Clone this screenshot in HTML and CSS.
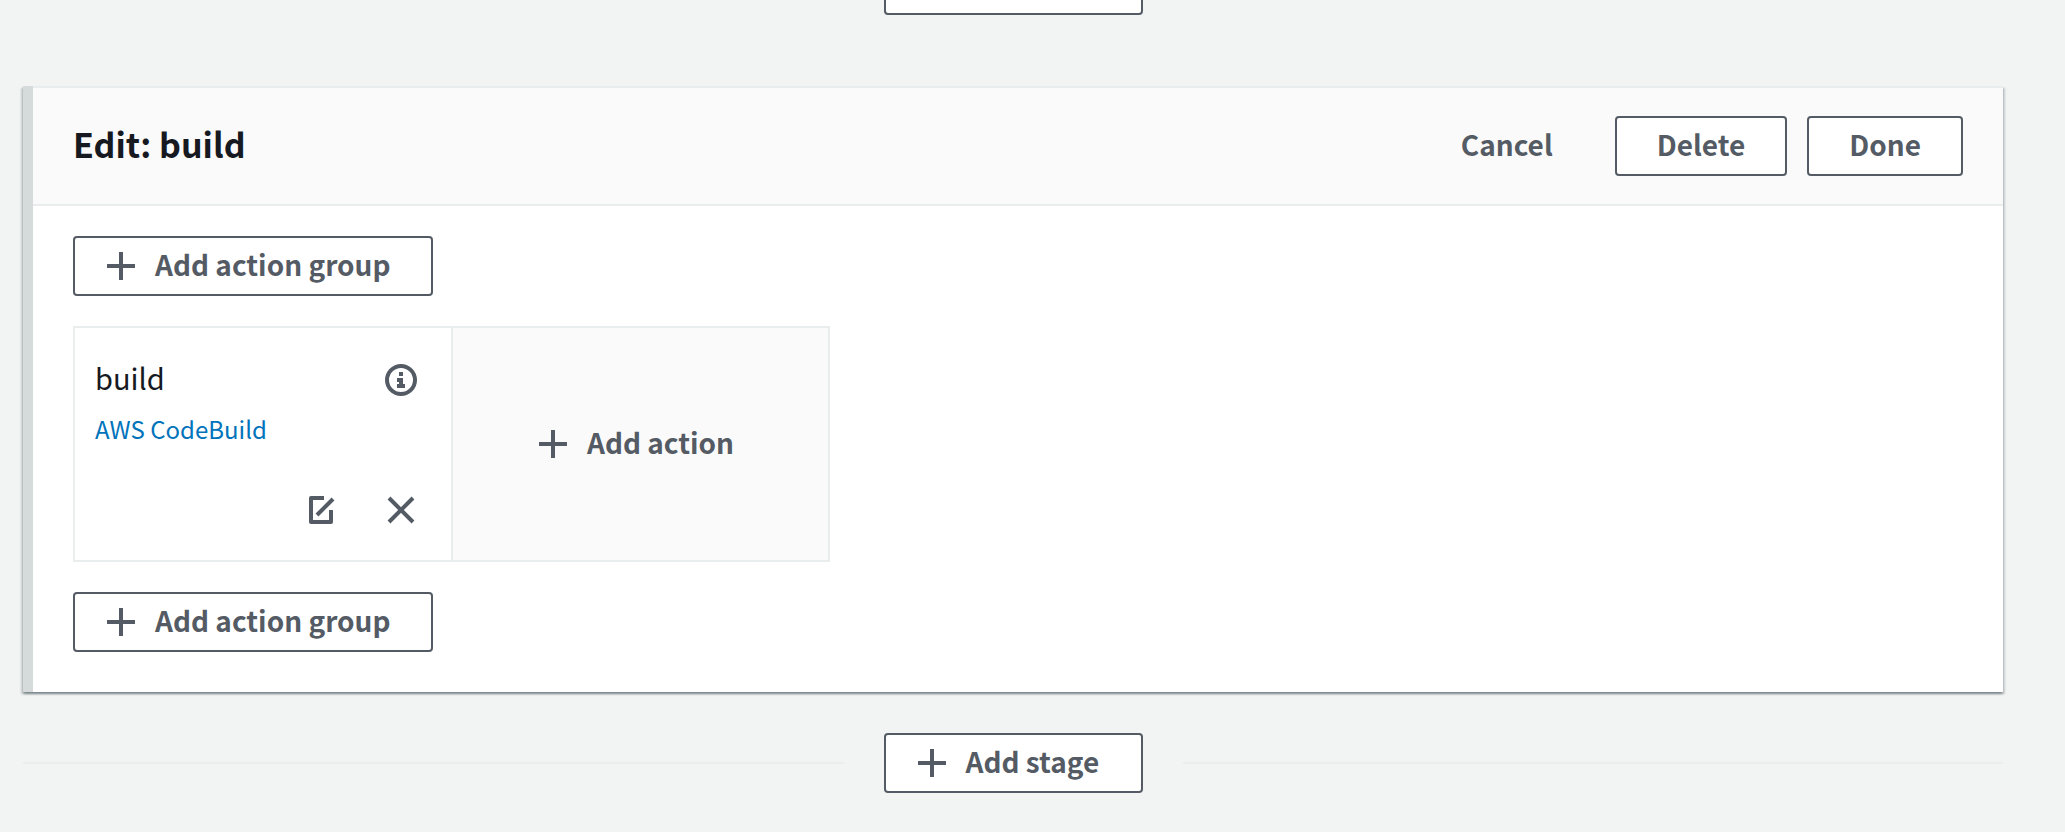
FILE: index.html
```
<!DOCTYPE html>
<html lang="en">
<head>
<meta charset="utf-8">
<title>Edit: build</title>
<link rel="stylesheet" href="styles.css">
</head>
<body>
<svg class="sprite" aria-hidden="true">
  <symbol id="plus" viewBox="0 0 32 32"><path d="M16 2v28M2 16h28"/></symbol>
  <symbol id="info" viewBox="0 0 32 32"><circle cx="16" cy="16" r="14"/><path class="solid" d="M14 8h4v4h-4zM12 14h6v6h2v4h-8v-4h2v-2h-2z"/></symbol>
  <symbol id="edit" viewBox="0 0 32 32"><path stroke-linejoin="round" d="M19 4H6v24h20V16"/><path d="M12 21L28 5"/></symbol>
  <symbol id="close" viewBox="0 0 32 32"><path d="M4 4l24 24M28 4L4 28"/></symbol>
</svg>
<main class="pipeline">
  <div class="stage-divider stage-divider-first">
    <button class="btn btn-icon" type="button" aria-label="Add stage before build"><svg class="icon"><use href="#plus"/></svg></button>
  </div>
  <section class="stage">
    <header class="stage-header">
      <h2 class="stage-title">Edit: build</h2>
      <div class="stage-actions">
        <button class="btn btn-link" type="button"><span class="label">Cancel</span></button>
        <button class="btn" type="button"><span class="label">Delete</span></button>
        <button class="btn" type="button"><span class="label">Done</span></button>
      </div>
    </header>
    <div class="stage-body">
      <button class="btn btn-icon" type="button"><svg class="icon"><use href="#plus"/></svg><span class="label">Add action group</span></button>
      <div class="action-group">
        <article class="action">
          <div class="action-top">
            <h3 class="action-name">build</h3>
            <button class="icon-btn" type="button" aria-label="Info"><svg class="icon"><use href="#info"/></svg></button>
          </div>
          <a class="provider" href="#">AWS CodeBuild</a>
          <div class="action-tools">
            <button class="icon-btn" type="button" aria-label="Edit action"><svg class="icon"><use href="#edit"/></svg></button>
            <button class="icon-btn" type="button" aria-label="Remove action"><svg class="icon"><use href="#close"/></svg></button>
          </div>
        </article>
        <button class="add-action" type="button"><svg class="icon"><use href="#plus"/></svg><span class="label">Add action</span></button>
      </div>
      <button class="btn btn-icon" type="button"><svg class="icon"><use href="#plus"/></svg><span class="label">Add action group</span></button>
    </div>
  </section>
  <div class="stage-divider">
    <button class="btn btn-icon" type="button"><svg class="icon"><use href="#plus"/></svg><span class="label">Add stage</span></button>
  </div>
</main>
</body>
</html>
```
FILE: styles.css
```
* { box-sizing: border-box; }
body {
  margin: 0;
  background: #f2f3f3;
  color: #16191f;
  font-family: "Noto Sans CJK SC", "Noto Sans", sans-serif;
  overflow: hidden;
}
.sprite { display: none; }
.pipeline { padding: 0 62px 0 23px; }
button { font: inherit; color: inherit; cursor: pointer; }
.icon {
  flex: none;
  width: 32px;
  height: 32px;
  fill: none;
  stroke: #545b64;
  stroke-width: 4;
}
.solid { fill: #545b64; stroke: none; }
.label { padding-bottom: 4px; }
.btn {
  display: inline-flex;
  align-items: center;
  justify-content: center;
  height: 60px;
  padding: 0 40px;
  border: 2px solid #545b64;
  border-radius: 4px;
  background: #fff;
  color: #545b64;
  font-size: 28px;
  font-weight: 700;
  line-height: 40px;
  white-space: nowrap;
}
.btn-icon { justify-content: flex-start; gap: 18px; padding: 0 41px 0 30px; }
.btn-link { border-color: transparent; background: transparent; }
.stage-divider {
  display: flex;
  align-items: center;
  gap: 40px;
  margin-top: 41px;
}
.stage-divider .btn { min-width: 259px; }
.stage-divider::before, .stage-divider::after {
  content: "";
  flex: 1;
  height: 2px;
  background: #eaeded;
}
.stage-divider-first { margin: -45px 0 71px; }
.stage {
  border-left: 10px solid #d5dbdb;
  background: #fff;
  box-shadow: 0 2px 2px 0 rgba(0, 28, 36, .3), 2px 2px 2px 0 rgba(0, 28, 36, .15), -2px 2px 2px 0 rgba(0, 28, 36, .15);
}
.stage-header {
  display: flex;
  align-items: center;
  justify-content: space-between;
  padding: 28px 40px;
  border-top: 2px solid #eaeded;
  border-bottom: 2px solid #eaeded;
  background: #fafafa;
}
.stage-title { margin: 0; padding-bottom: 4px; font-size: 34px; line-height: 44px; font-weight: 700; }
.stage-actions { display: flex; gap: 20px; }
.stage-body {
  display: flex;
  flex-direction: column;
  align-items: flex-start;
  gap: 30px;
  padding: 30px 40px 40px;
}
.action-group {
  display: grid;
  grid-template-columns: 378px 375px;
  min-height: 236px;
  border: 2px solid #eaeded;
}
.action {
  display: flex;
  flex-direction: column;
  padding: 30px 20px 34px;
  border-right: 2px solid #eaeded;
}
.action-top, .action-tools { display: flex; align-items: center; padding-right: 14px; }
.action-top { justify-content: space-between; }
.action-name { margin: 0; padding-bottom: 6px; font-size: 29px; line-height: 38px; font-weight: 400; }
.provider { color: #0073bb; font-size: 24px; line-height: 54px; text-decoration: none; }
.action-tools { justify-content: flex-end; gap: 48px; margin-top: auto; }
.icon-btn { display: flex; padding: 0; border: 0; background: none; }
.add-action {
  display: flex;
  align-items: center;
  justify-content: center;
  gap: 18px;
  padding: 0 10px 0 0;
  border: 0;
  background: #fafafa;
  color: #545b64;
  font-size: 28px;
  font-weight: 700;
}
```
